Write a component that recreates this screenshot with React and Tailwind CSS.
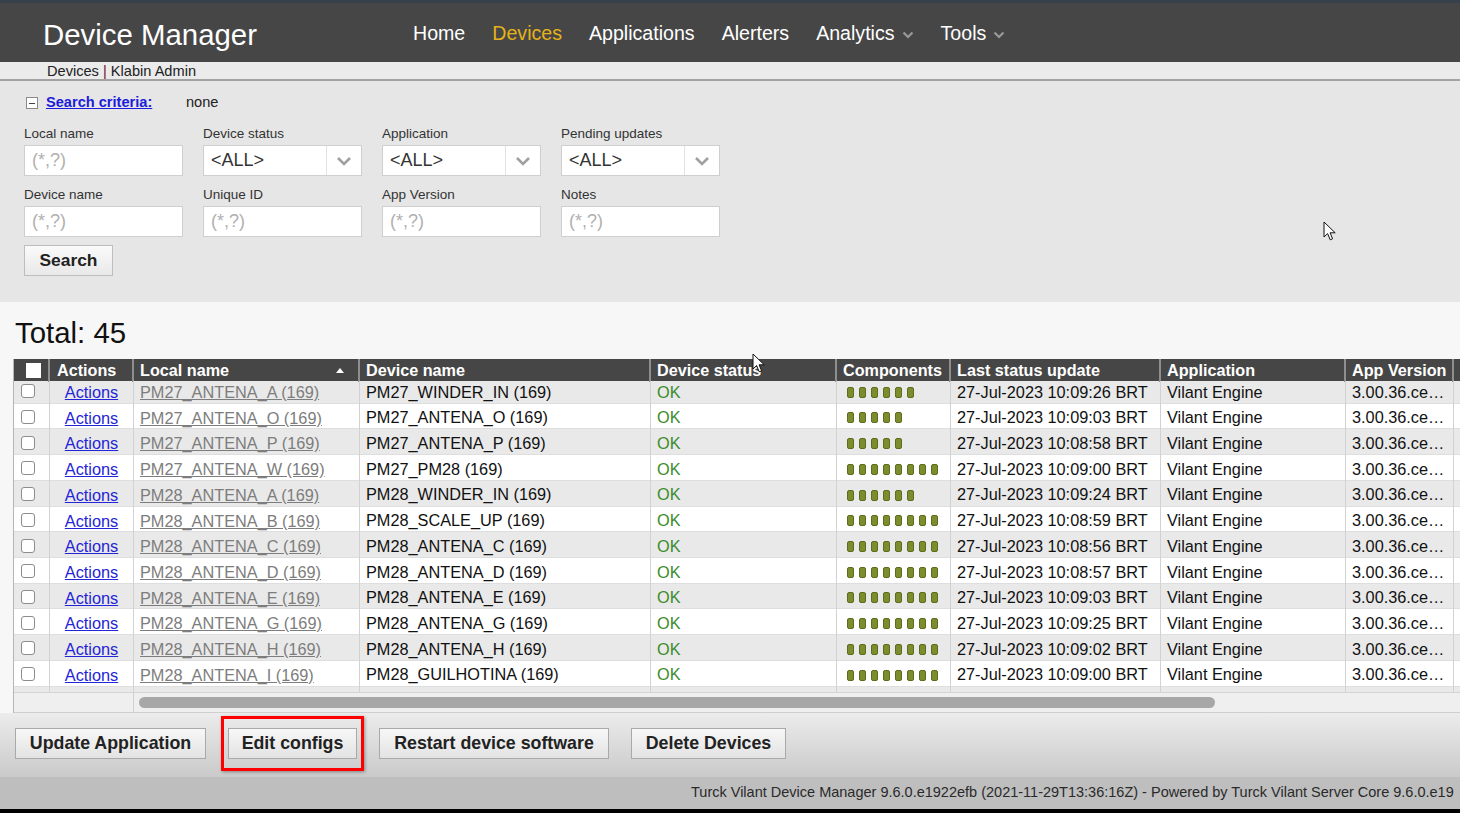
import React from 'react';

const navItems = [
  { label: 'Home' },
  { label: 'Devices', active: true },
  { label: 'Applications' },
  { label: 'Alerters' },
  { label: 'Analytics', dropdown: true },
  { label: 'Tools', dropdown: true },
];

const rows = [
  ['PM27_ANTENA_A (169)', 'PM27_WINDER_IN (169)', 6, '27-Jul-2023 10:09:26 BRT'],
  ['PM27_ANTENA_O (169)', 'PM27_ANTENA_O (169)', 5, '27-Jul-2023 10:09:03 BRT'],
  ['PM27_ANTENA_P (169)', 'PM27_ANTENA_P (169)', 5, '27-Jul-2023 10:08:58 BRT'],
  ['PM27_ANTENA_W (169)', 'PM27_PM28 (169)', 8, '27-Jul-2023 10:09:00 BRT'],
  ['PM28_ANTENA_A (169)', 'PM28_WINDER_IN (169)', 6, '27-Jul-2023 10:09:24 BRT'],
  ['PM28_ANTENA_B (169)', 'PM28_SCALE_UP (169)', 8, '27-Jul-2023 10:08:59 BRT'],
  ['PM28_ANTENA_C (169)', 'PM28_ANTENA_C (169)', 8, '27-Jul-2023 10:08:56 BRT'],
  ['PM28_ANTENA_D (169)', 'PM28_ANTENA_D (169)', 8, '27-Jul-2023 10:08:57 BRT'],
  ['PM28_ANTENA_E (169)', 'PM28_ANTENA_E (169)', 8, '27-Jul-2023 10:09:03 BRT'],
  ['PM28_ANTENA_G (169)', 'PM28_ANTENA_G (169)', 8, '27-Jul-2023 10:09:25 BRT'],
  ['PM28_ANTENA_H (169)', 'PM28_ANTENA_H (169)', 8, '27-Jul-2023 10:09:02 BRT'],
  ['PM28_ANTENA_I (169)', 'PM28_GUILHOTINA (169)', 8, '27-Jul-2023 10:09:00 BRT'],
];

const cols = 'grid grid-cols-[36px_84px_226px_291px_186px_114px_210px_185px_108px_1fr]';

function Chevron() {
  return (
    <svg width="12" height="8" viewBox="0 0 12 8" className="ml-[7px] mt-[3px]">
      <path d="M1.5 1.5l4.5 4.5 4.5-4.5" stroke="#9a9a9a" strokeWidth="2.2" fill="none" />
    </svg>
  );
}

function SelectChevron() {
  return (
    <svg width="16" height="10" viewBox="0 0 16 10">
      <path d="M2 2l6 6 6-6" stroke="#a0a0a0" strokeWidth="2.6" fill="none" />
    </svg>
  );
}

function Cursor({ className }) {
  return (
    <svg className={className} width="14" height="21" viewBox="0 0 14 21">
      <path d="M1 1v15l3.6-3.4 2.6 6.2 2.4-1-2.5-6h5.1z" fill="#fff" stroke="#111" strokeWidth="1" strokeLinejoin="round" />
    </svg>
  );
}

function TextInput() {
  return (
    <div className="h-[31px] bg-white border border-[#cfcfcf] flex items-center pl-[7px] text-[18px] text-[#b0b0b0]">
      (*,?)
    </div>
  );
}

function SelectInput() {
  return (
    <div className="h-[31px] bg-white border border-[#cfcfcf] flex items-center">
      <span className="flex-1 pl-[7px] text-[18px] text-[#333]">&lt;ALL&gt;</span>
      <span className="w-[35px] h-full border-l border-[#e2e2e2] flex items-center justify-center">
        <SelectChevron />
      </span>
    </div>
  );
}

function Field({ label, children }) {
  return (
    <div>
      <div className="h-[15px] mb-[4px] text-[13.5px] leading-[15px] text-[#333]">{label}</div>
      {children}
    </div>
  );
}

function Components({ n }) {
  return (
    <div className="flex gap-[5px] pl-[10px]">
      {Array.from({ length: n }).map((_, i) => (
        <span key={i} className="w-[7px] h-[11px] rounded-[2px] bg-[#7b8d2c] border border-[#5e6d1d]" />
      ))}
    </div>
  );
}

function Button({ children, w }) {
  return (
    <button className={`h-[31px] ${w} bg-linear-to-b from-[#f7f7f7] to-[#e3e3e3] border border-[#a9a9a9] font-bold text-[17.8px] text-[#222]`}>
      {children}
    </button>
  );
}

export default function App() {
  return (
    <div className="relative w-[1460px] h-[813px] overflow-hidden font-['Liberation_Sans',Arial,sans-serif] bg-[#f7f7f7]">
      {/* Header */}
      <header className="h-[62px] bg-[#464646] border-t-[3px] border-[#36414b] flex items-center">
        <div className="ml-[43px] w-[370px] mt-[4px] text-white text-[29.4px] leading-none">Device Manager</div>
        <nav className="flex items-center gap-[27px] text-[19.6px] leading-none mt-[2px]">
          {navItems.map(item => (
            <span key={item.label} className={`flex items-center ${item.active ? 'text-[#e5b219]' : 'text-white'}`}>
              {item.label}
              {item.dropdown && <Chevron />}
            </span>
          ))}
        </nav>
      </header>

      {/* Sub bar */}
      <div className="h-[19px] bg-[#ebebeb] border-b-2 border-[#a3a3a3] pl-[47px] text-[14.6px] leading-[19px] text-[#222]">
        Devices <span className="text-[#6b1d1d]">|</span> Klabin Admin
      </div>

      {/* Search criteria */}
      <section className="h-[221px] bg-[#e6e6e6] pl-[24px] pt-[13px]">
        <div className="h-[18px] flex items-center text-[14.6px]">
          <span className="ml-[2px] w-[12px] h-[12px] border border-[#8a8a8a] bg-white flex items-center justify-center">
            <span className="w-[6px] h-[1px] bg-[#444]" />
          </span>
          <span className="ml-[8px] w-[140px] font-bold text-[#1c1cdc] underline">Search criteria:</span>
          <span className="text-[#222]">none</span>
        </div>
        <div className="mt-[14px] grid grid-cols-[159px_159px_159px_159px] gap-x-[20px] gap-y-[11px]">
          <Field label="Local name"><TextInput /></Field>
          <Field label="Device status"><SelectInput /></Field>
          <Field label="Application"><SelectInput /></Field>
          <Field label="Pending updates"><SelectInput /></Field>
          <Field label="Device name"><TextInput /></Field>
          <Field label="Unique ID"><TextInput /></Field>
          <Field label="App Version"><TextInput /></Field>
          <Field label="Notes"><TextInput /></Field>
        </div>
        <button className="mt-[8px] h-[31px] w-[89px] bg-linear-to-b from-[#fafafa] to-[#e9e9e9] border border-[#bdbdbd] font-bold text-[17.4px] text-[#222]">
          Search
        </button>
      </section>

      {/* Results */}
      <section className="bg-[#f7f7f7]">
        <div className="pt-[15px] pl-[15px] h-[47px] text-[29.4px] leading-[32px] text-[#111]">Total: 45</div>
        <div className="mt-[10px] ml-[13px] border-l border-[#b5b5b5]">
          {/* Table header */}
          <div className={`${cols} h-[22px] bg-[#464646] text-white font-bold text-[16.2px] leading-[23px]`}>
            <div className="border-r-2 border-[#8e8e8e] flex items-center pl-[12px]">
              <span className="w-[15px] h-[15px] bg-white" />
            </div>
            <div className="border-r-2 border-[#8e8e8e] pl-[7px]">Actions</div>
            <div className="border-r-2 border-[#8e8e8e] pl-[6px] pr-[14px] flex items-center justify-between">
              Local name
              <svg width="8" height="5" viewBox="0 0 8 5"><path d="M0 5L4 0L8 5Z" fill="#fff" /></svg>
            </div>
            <div className="border-r-2 border-[#8e8e8e] pl-[6px]">Device name</div>
            <div className="border-r-2 border-[#8e8e8e] pl-[6px]">Device status</div>
            <div className="border-r-2 border-[#8e8e8e] pl-[6px]">Components</div>
            <div className="border-r-2 border-[#8e8e8e] pl-[6px]">Last status update</div>
            <div className="border-r-2 border-[#8e8e8e] pl-[6px]">Application</div>
            <div className="border-r-2 border-[#8e8e8e] pl-[6px]">App Version</div>
            <div />
          </div>

          {/* Table body */}
          <div className="h-[311px] overflow-hidden">
            <div className="-mt-[3px]">
              {[...rows, null].map((r, i) => (
                <div
                  key={i}
                  className={`${cols} h-[25.73px] text-[16.3px] text-[#111] ${i % 2 === 0 ? 'bg-[#e9e9e9]' : 'bg-white'} border-b border-[#dedede]`}
                >
                  <div className="border-r border-[#d2d2d2] flex items-center pl-[7px]">
                    {r && <span className="w-[14px] h-[14px] rounded-[3px] bg-white border border-[#8c8c8c]" />}
                  </div>
                  <div className="border-r border-[#d2d2d2] flex items-center justify-center pt-[2px]">
                    {r && <span className="text-[#2424d8] underline">Actions</span>}
                  </div>
                  <div className="border-r border-[#d2d2d2] flex items-center pl-[6px] pt-[2px]">
                    {r && <span className="text-[#7d7d7d] underline">{r[0]}</span>}
                  </div>
                  <div className="border-r border-[#d2d2d2] flex items-center pl-[6px] pt-[1px]">{r && r[1]}</div>
                  <div className="border-r border-[#d2d2d2] flex items-center pl-[6px] pt-[1px] text-[#3c8c2c]">{r && 'OK'}</div>
                  <div className="border-r border-[#d2d2d2] flex items-center pt-[2px]">{r && <Components n={r[2]} />}</div>
                  <div className="border-r border-[#d2d2d2] flex items-center pl-[6px] pt-[1px]">{r && r[3]}</div>
                  <div className="border-r border-[#d2d2d2] flex items-center pl-[6px] pt-[1px]">{r && 'Vilant Engine'}</div>
                  <div className="border-r border-[#d2d2d2] flex items-center pl-[6px] pt-[1px]">{r && '3.00.36.ce…'}</div>
                  <div />
                </div>
              ))}
            </div>
          </div>

          {/* Horizontal scroll bar */}
          <div className="h-[21px] flex border-t border-[#d4d4d4] border-b border-b-[#cfcfcf] bg-[#efefef]">
            <div className="w-[120px] border-r border-[#cfcfcf]" />
            <div className="flex-1 pl-[5px] pt-[4px]">
              <div className="w-[1076px] h-[11px] rounded-full bg-[#a7a7a7]" />
            </div>
          </div>
        </div>
      </section>

      {/* Action buttons */}
      <div className="h-[64px] bg-linear-to-b from-[#ececec] to-[#cacaca] flex items-start pt-[15px] pl-[15px] gap-[22px]">
        <Button w="w-[191px]">Update Application</Button>
        <div className="relative">
          <Button w="w-[129px]">Edit configs</Button>
          <span className="absolute -left-[7px] -right-[7px] -top-[12px] -bottom-[12px] border-[3px] border-[#f00] shadow-[1px_1px_3px_rgba(0,0,0,0.35)]" />
        </div>
        <Button w="w-[230px]">Restart device software</Button>
        <Button w="w-[155px]">Delete Devices</Button>
      </div>

      {/* Footer */}
      <footer className="h-[32px] bg-[#bebebe] pl-[691px] flex items-center text-[14.5px] text-[#2a2a2a] whitespace-nowrap overflow-hidden">
        Turck Vilant Device Manager 9.6.0.e1922efb (2021-11-29T13:36:16Z) - Powered by Turck Vilant Server Core 9.6.0.e19
      </footer>
      <div className="h-[4px] bg-black" />

      {/* Mouse pointers */}
      <Cursor className="absolute left-[752px] top-[353px]" />
      <Cursor className="absolute left-[1323px] top-[221px]" />
    </div>
  );
}
